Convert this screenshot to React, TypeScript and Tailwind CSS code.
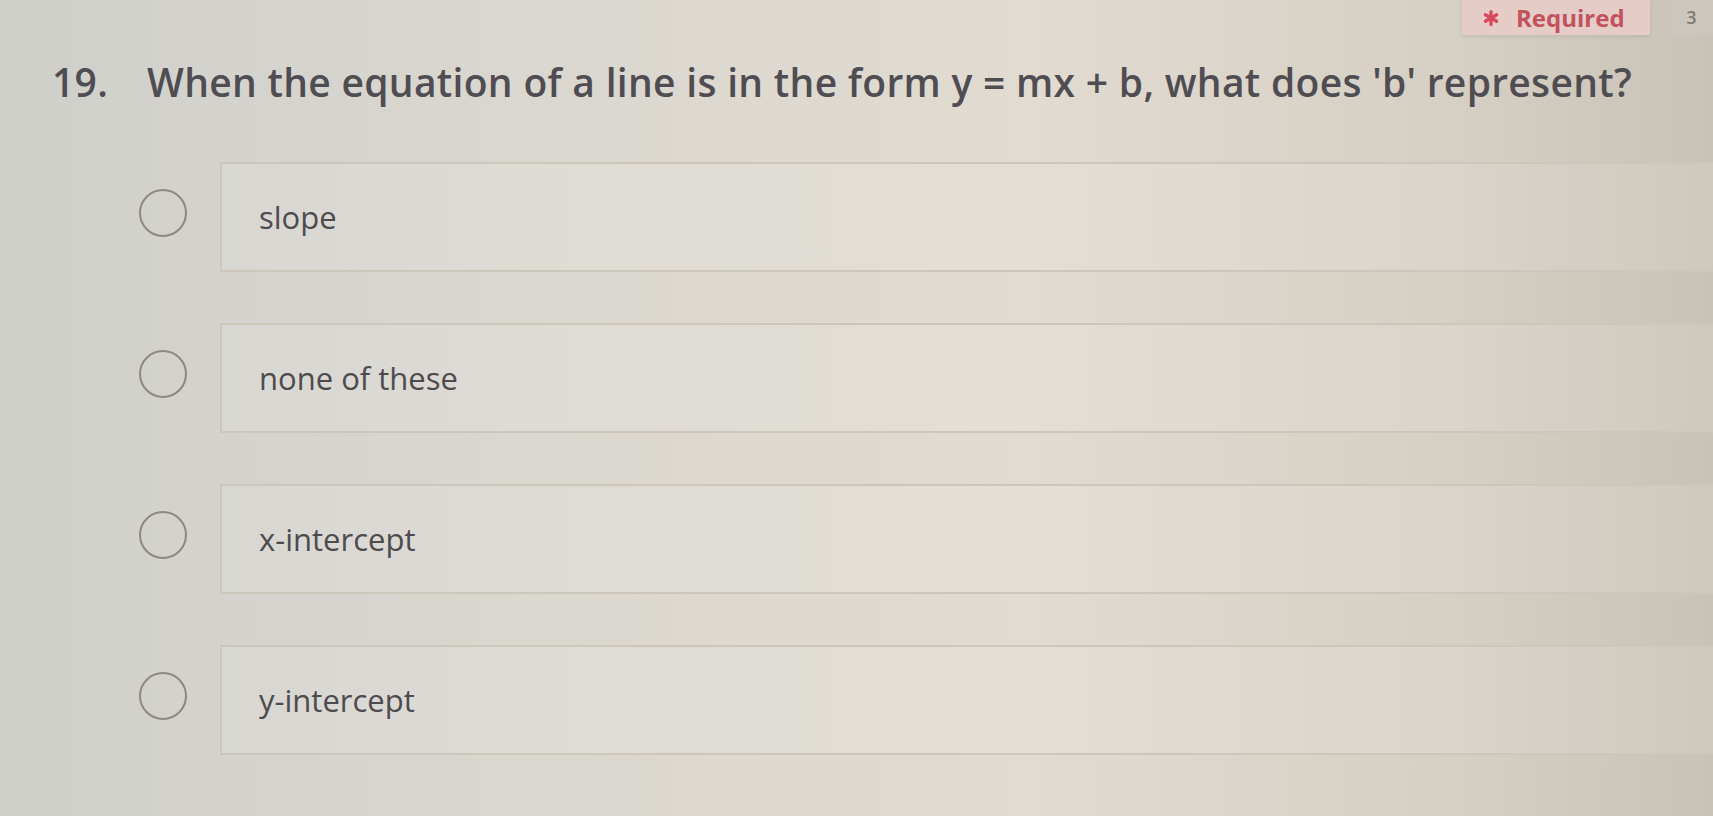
import { Asterisk } from 'lucide-react';

const options = ['slope', 'none of these', 'x-intercept', 'y-intercept'];

export default function App() {
  return (
    <div className="relative w-[1713px] h-[816px] overflow-hidden bg-[linear-gradient(90deg,#cfcfca_0%,#dad7d0_30%,#e1dbd1_60%,#d6cfc4_85%,#c9c2b6_100%)] font-['Open_Sans',sans-serif]">
      {/* header strip */}
      <div className="flex justify-end h-[38px]">
        <div className="flex items-center gap-[12px] w-[188px] h-[35px] pl-[16px] bg-[#e6ccc7] shadow-[0_2px_4px_rgba(0,0,0,0.08)]">
          <Asterisk className="w-[26px] h-[26px] text-[#d9485a]" strokeWidth={3} />
          <span className="text-[24px] font-bold text-[#c2525c] leading-none">Required</span>
        </div>
        <div className="w-[20px]" />
        <div className="flex items-center justify-center w-[43px] h-[35px] bg-[#cbc6be] text-[18px] text-[#7f7a73] font-semibold">3</div>
      </div>

      {/* question */}
      <div className="flex items-center mt-[20px] pl-[52px] text-[39px] font-semibold text-[#4f4d52] leading-[48px] tracking-[0.3px]">
        <span className="w-[95px]">19.</span>
        <span>When the equation of a line is in the form y = mx + b, what does 'b' represent?</span>
      </div>

      {/* options */}
      <div className="flex flex-col gap-[51px] mt-[56px]">
        {options.map((o) => (
          <div key={o} className="flex items-center">
            <div className="ml-[139px] mb-[8px] w-[48px] h-[48px] rounded-full border-[2.5px] border-[#8d8882]" />
            <div className="ml-[33px] flex-1 h-[110px] flex items-center pl-[37px] border-y-2 border-l-2 border-[#cdc6bb] bg-white/10">
              <span className="text-[31px] text-[#4d4b4e]">{o}</span>
            </div>
          </div>
        ))}
      </div>
    </div>
  );
}
